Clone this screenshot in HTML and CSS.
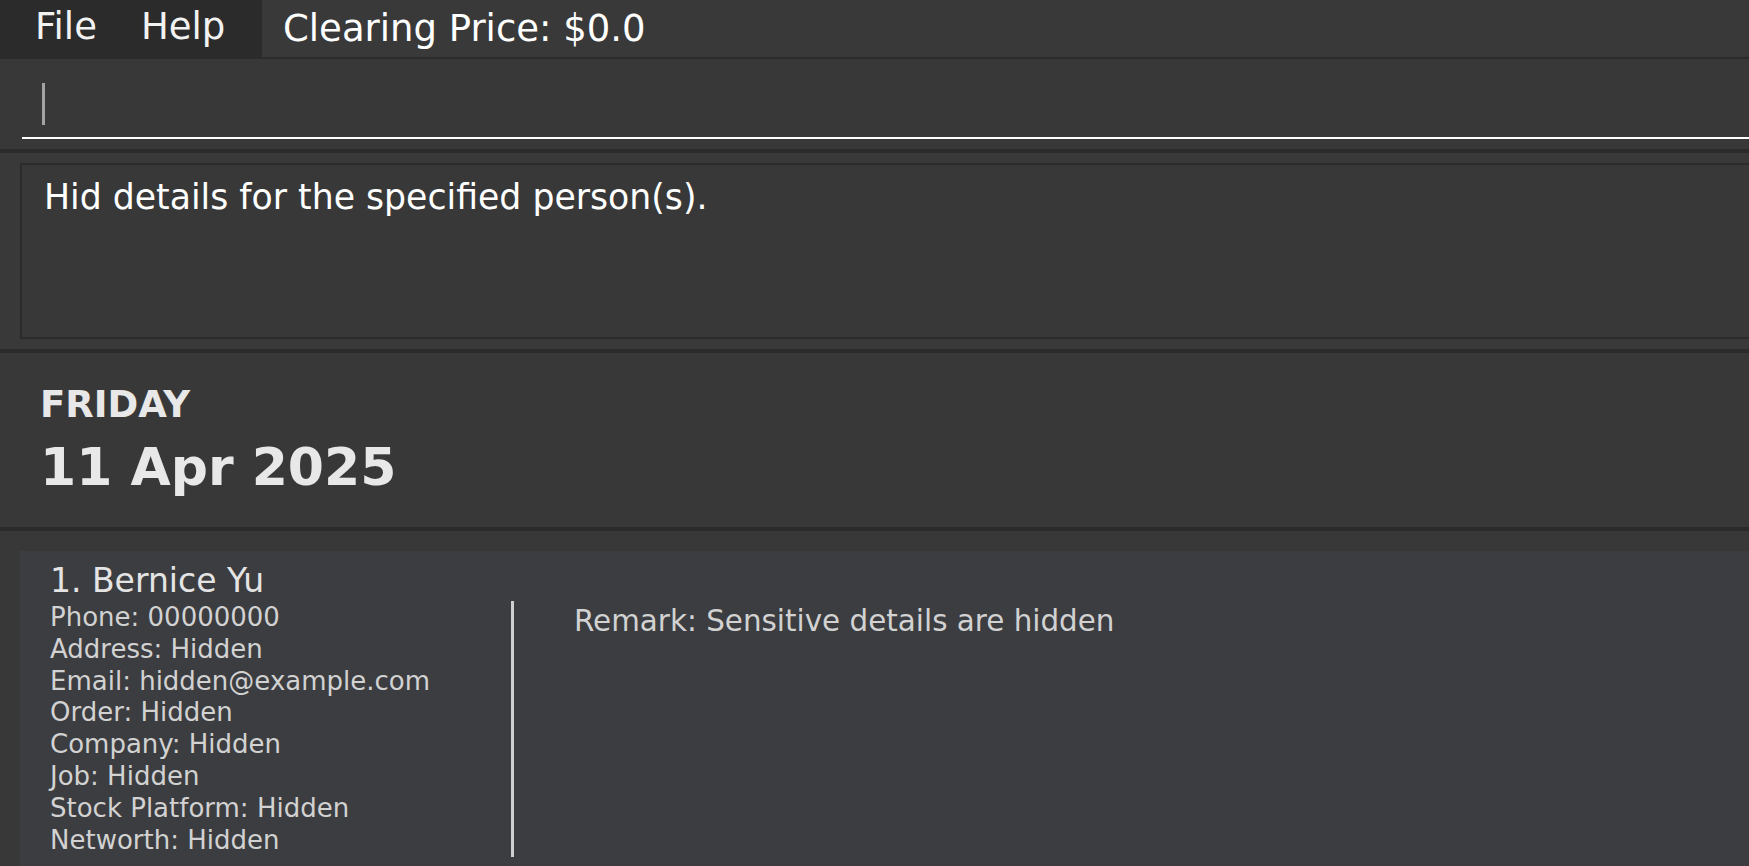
FILE: index.html
```html
<!DOCTYPE html>
<html lang="en">
<head>
<meta charset="utf-8">
<title>Address Book</title>
<link rel="stylesheet" href="styles.css">
</head>
<body>
<div class="app">
  <header class="menubar">
    <nav class="menu">
      <span class="menu-item">File</span>
      <span class="menu-item">Help</span>
    </nav>
    <div class="clearing">Clearing Price: $0.0</div>
  </header>

  <section class="command">
    <div class="field"><span class="caret"></span></div>
  </section>

  <section class="result">
    <div class="result-box">Hid details for the specified person(s).</div>
  </section>

  <section class="date">
    <div class="weekday">FRIDAY</div>
    <div class="fulldate">11 Apr 2025</div>
  </section>

  <section class="list">
    <article class="card">
      <div class="info">
        <div class="name">1. Bernice Yu</div>
        <div class="line">Phone: 00000000</div>
        <div class="line">Address: Hidden</div>
        <div class="line">Email: hidden@example.com</div>
        <div class="line">Order: Hidden</div>
        <div class="line">Company: Hidden</div>
        <div class="line">Job: Hidden</div>
        <div class="line">Stock Platform: Hidden</div>
        <div class="line">Networth: Hidden</div>
      </div>
      <div class="sep"></div>
      <div class="remark">Remark: Sensitive details are hidden</div>
    </article>
  </section>
</div>
</body>
</html>
```

FILE: styles.css
```css
html, body {
  margin: 0;
  padding: 0;
  background: #383838;
  overflow: hidden;
  height: 100%;
}

.app {
  width: calc(100% + 40px);
  font-family: "DejaVu Sans", "Liberation Sans", sans-serif;
  color: #ffffff;
}

.menubar {
  display: flex;
  height: 57px;
  background: #393939;
  border-bottom: 2px solid #2b2b2b;
}

.menu {
  display: flex;
  gap: 44px;
  box-sizing: border-box;
  width: 262px;
  height: 59px;
  padding-left: 35px;
  background: #2b2b2b;
}

.menu-item {
  font-size: 37px;
  line-height: 53px;
  color: #f2f2f2;
}

.clearing {
  padding-left: 21px;
  font-size: 37px;
  line-height: 57px;
  color: #ffffff;
}

.command {
  background: #383838;
  padding: 0 0 10px 22px;
}

.field {
  border-bottom: 2px solid #ffffff;
  padding-left: 20px;
  padding-top: 24px;
  height: 54px;
}

.caret {
  display: block;
  width: 3px;
  height: 42px;
  background: #a3a3a3;
}

.result {
  border-top: 4px solid #2b2b2b;
  padding: 10px 0 10px 20px;
  background: #393939;
}

.result-box {
  height: 161px;
  border: 2px solid #2b2b2b;
  background: #383838;
  padding: 11px 0 0 22px;
  font-size: 34.7px;
  line-height: 42px;
  color: #ffffff;
}

.date {
  border-top: 4px solid #2b2b2b;
  border-bottom: 4px solid #2b2b2b;
  height: 174px;
  padding: 0 0 0 40px;
  background: #383838;
  color: #e8e8e8;
  font-weight: bold;
}

.weekday {
  padding-top: 31px;
  font-size: 37px;
  line-height: 41px;
}

.fulldate {
  margin-top: 12px;
  font-size: 52px;
  line-height: 60px;
}

.list {
  padding: 20px 0 0 20px;
  background: #383838;
}

.card {
  display: flex;
  align-items: flex-start;
  height: 400px;
  background: #3c3d40;
}

.info {
  box-sizing: border-box;
  width: 491px;
  padding: 11px 0 0 30px;
}

.name {
  font-size: 33px;
  line-height: 38px;
  color: #e4e4e4;
  margin-bottom: 2px;
}

.line {
  font-size: 26px;
  line-height: 31.8px;
  color: #d2d2d2;
}

.sep {
  width: 3px;
  height: 256px;
  margin-top: 50px;
  background: #cfcfcf;
}

.remark {
  margin: 53px 0 0 60px;
  font-size: 29.4px;
  line-height: 34px;
  color: #d2d2d2;
}
```
